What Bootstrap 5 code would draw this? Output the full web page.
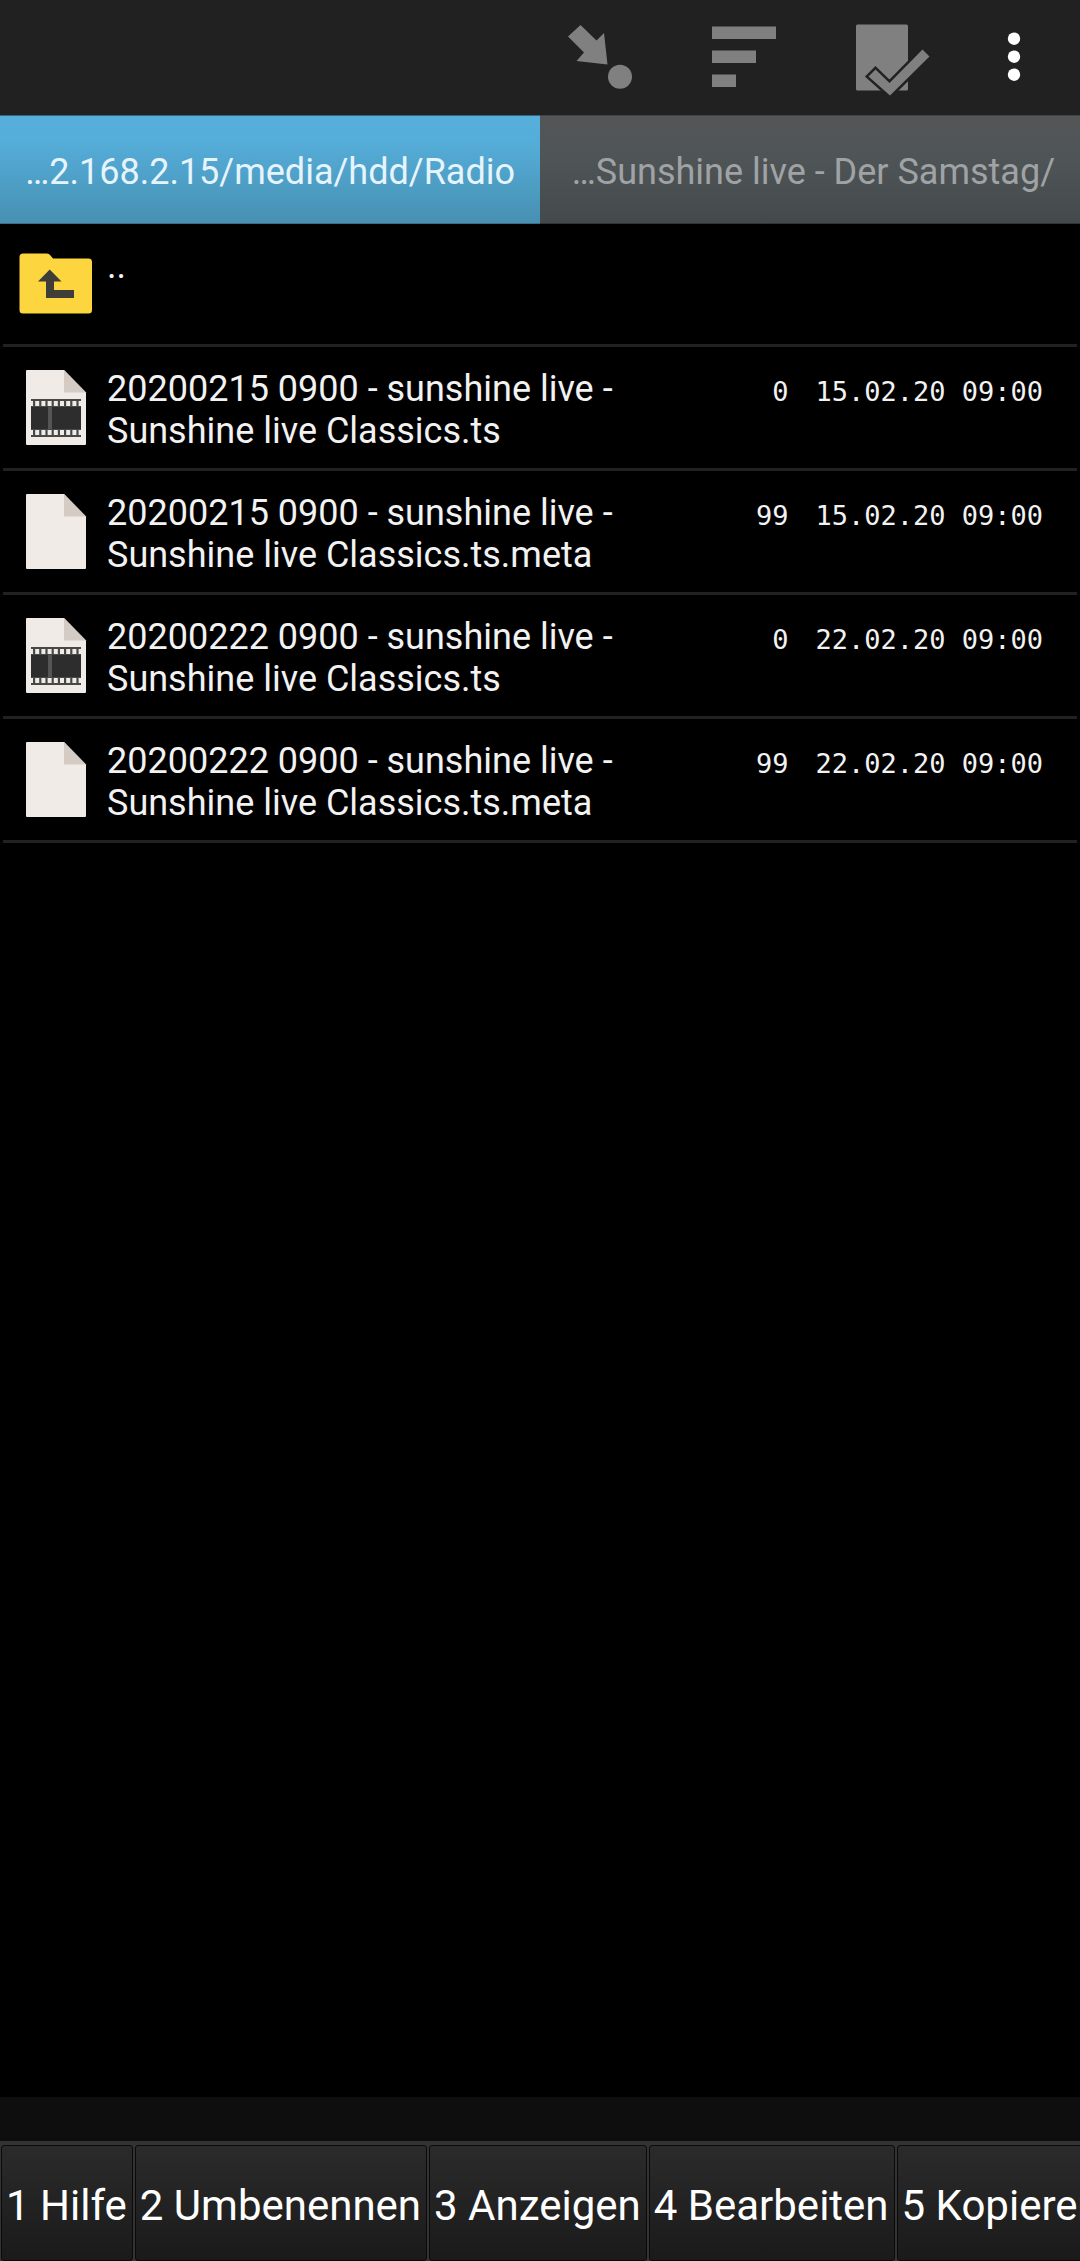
<!DOCTYPE html>
<html lang="de">
<head>
<meta charset="utf-8">
<meta name="viewport" content="width=device-width, initial-scale=1">
<title>Dateimanager</title>
<link href="https://cdn.jsdelivr.net/npm/bootstrap@5.3.0/dist/css/bootstrap.min.css" rel="stylesheet">
<style>
  body { background: #000; color: #f2f2f2; font-family: Roboto, "Liberation Sans", sans-serif; font-size: 36px; line-height: 42px; }
  .app-toolbar { background: #212121; height: 115px; padding: 0 52px 2px; gap: 64px; }
  .tool-btn { width: 80px; height: 100px; color: #808080; }
  .tool-more { width: 28px; color: #fff; }
  .tool-btn svg, .entry svg { display: block; }
  .pane-tabs { height: 109px; }
  .pane-tab { border: 0; border-radius: 0; padding: 4px 25px 0; color: #a0a3a5; background: linear-gradient(#525657, #4f5457 40%, #44494b); border-top: 1px solid #3f4547; border-bottom: 1px solid #2f3537; }
  .pane-tab.active { color: #e6f4fc; background: linear-gradient(#56aedb, #55aeda 22%, #4790b2); border-top-color: #35677f; border-bottom-color: #3a6c83; }
  .file-list { padding: 0 3px; }
  .entry { color: inherit; text-decoration: none; gap: 11px; height: 124px; padding: 0 34px 0 13px; border-bottom: 3px solid #212121; }
  .entry-first { height: 123px; }
  .entry svg { margin-bottom: 2px; }
  .entry-name { padding: 21px 0 15px; }
  .entry-meta { padding-top: 24px; font-family: "DejaVu Sans Mono", monospace; font-size: 27px; gap: 27px; }
  .entry-size { width: 60px; }
  .status-strip { background: #0e0e0e; height: 44px; }
  .key-bar { background: #333; padding: 4px 1px 0; gap: 2px; height: 120px; }
  .key-btn { color: #fff; font-size: 42px; line-height: 49px; padding: 5px 5px 0 4px; border: 1px solid #0a0a0a; border-radius: 3px; background: linear-gradient(#2b2b2b, #1a1a1a); }
</style>
</head>
<body class="d-flex flex-column min-vh-100 overflow-x-hidden">

<svg class="d-none" aria-hidden="true">
  <symbol id="sheet" viewBox="0 0 80 80">
    <path fill="#f0ebe7" d="M10 4Q10 3 11 3H48L70 25.500V77Q70 78 69 78H11Q10 78 10 77Z"/>
    <path fill="#d4cbc4" d="M48 3L70 25.500H48Z"/>
  </symbol>
  <symbol id="film" viewBox="0 0 80 80">
    <use href="#sheet"/>
    <path fill="#484848" d="M15 32H65V70H15Z"/>
    <path fill="#2d2d2d" d="M15 40H65V62H15Z"/>
    <path fill="#555" d="M32 40h4v22h-4z"/>
    <path stroke="#f0ebe7" stroke-width="5" stroke-dasharray="4 2.200" stroke-dashoffset="2" d="M15 36.500H65M15 65.500H65"/>
  </symbol>
</svg>

<header class="app-toolbar d-flex justify-content-end align-items-center">
  <button class="tool-btn btn p-0 border-0" type="button" aria-label="Gehe zu">
    <svg width="80" height="100" viewBox="568 7 80 100" fill="currentColor"><path d="M580.500 25L568 36.500 584 52.500 576.500 61 607.500 64.500 604 33 596.500 40.500Z"/><circle cx="620" cy="76.700" r="12"/></svg>
  </button>
  <button class="tool-btn btn p-0 border-0" type="button" aria-label="Sortieren">
    <svg width="80" height="100" viewBox="712 7 80 100" fill="currentColor"><path d="M712 26.500h64V39h-64zM712 50.500h44V63h-44zM712 74.500h24V87h-24z"/></svg>
  </button>
  <button class="tool-btn btn p-0 border-0" type="button" aria-label="Auswählen">
    <svg width="80" height="100" viewBox="856 7 80 100" fill="currentColor"><rect x="856" y="24.500" width="52" height="66" rx="1.500"/><path stroke="#212121" stroke-width="5" paint-order="stroke" d="M868.500 76.500L875.500 69.500 889.500 83 922.500 49.500 929.500 56.500 890 95.500Z"/></svg>
  </button>
  <button class="tool-btn tool-more btn p-0 border-0" type="button" aria-label="Mehr">
    <svg width="28" height="100" viewBox="1000 7 28 100" fill="currentColor"><circle cx="1014" cy="38.700" r="6.200"/><circle cx="1014" cy="56.700" r="6.200"/><circle cx="1014" cy="74.700" r="6.200"/></svg>
  </button>
</header>

<nav class="pane-tabs d-flex" aria-label="Fenster">
  <button class="pane-tab active w-50 text-end text-nowrap" type="button">…2.168.2.15/media/hdd/Radio</button>
  <button class="pane-tab w-50 text-end text-nowrap" type="button">…Sunshine live - Der Samstag/</button>
</nav>

<main class="file-list flex-grow-1">
  <a class="entry entry-first d-flex" href="#">
    <svg class="align-self-center flex-shrink-0" width="80" height="80" viewBox="16 243 80 80"><path fill="#fdd63f" d="M23 253.500H47Q49 253.500 50.500 255.500L53 258.500H88.500Q92 258.500 92 262V310Q92 313.500 88.500 313.500H23Q19.500 313.500 19.500 310V257Q19.500 253.500 23 253.500Z"/><path fill="#3f3d38" d="M49.700 269.500L38 281.500H46V298H74V290H54V281.500H61.500Z"/></svg>
    <span class="entry-name">..</span>
  </a>
  <a class="entry d-flex" href="#">
    <svg class="align-self-center flex-shrink-0" width="80" height="80"><use href="#film"/></svg>
    <span class="entry-name flex-fill">20200215 0900 - sunshine live - Sunshine live Classics.ts</span>
    <span class="entry-meta d-flex text-nowrap"><span class="entry-size text-end">0</span><span>15.02.20 09:00</span></span>
  </a>
  <a class="entry d-flex" href="#">
    <svg class="align-self-center flex-shrink-0" width="80" height="80"><use href="#sheet"/></svg>
    <span class="entry-name flex-fill">20200215 0900 - sunshine live - Sunshine live Classics.ts.meta</span>
    <span class="entry-meta d-flex text-nowrap"><span class="entry-size text-end">99</span><span>15.02.20 09:00</span></span>
  </a>
  <a class="entry d-flex" href="#">
    <svg class="align-self-center flex-shrink-0" width="80" height="80"><use href="#film"/></svg>
    <span class="entry-name flex-fill">20200222 0900 - sunshine live - Sunshine live Classics.ts</span>
    <span class="entry-meta d-flex text-nowrap"><span class="entry-size text-end">0</span><span>22.02.20 09:00</span></span>
  </a>
  <a class="entry d-flex" href="#">
    <svg class="align-self-center flex-shrink-0" width="80" height="80"><use href="#sheet"/></svg>
    <span class="entry-name flex-fill">20200222 0900 - sunshine live - Sunshine live Classics.ts.meta</span>
    <span class="entry-meta d-flex text-nowrap"><span class="entry-size text-end">99</span><span>22.02.20 09:00</span></span>
  </a>
</main>

<div class="status-strip"></div>
<footer class="key-bar d-flex overflow-hidden">
  <button class="key-btn flex-shrink-0" type="button">1 Hilfe</button>
  <button class="key-btn flex-shrink-0" type="button">2 Umbenennen</button>
  <button class="key-btn flex-shrink-0" type="button">3 Anzeigen</button>
  <button class="key-btn flex-shrink-0" type="button">4 Bearbeiten</button>
  <button class="key-btn flex-shrink-0" type="button">5 Kopieren</button>
</footer>

<script src="https://cdn.jsdelivr.net/npm/bootstrap@5.3.0/dist/js/bootstrap.bundle.min.js"></script>
</body>
</html>
